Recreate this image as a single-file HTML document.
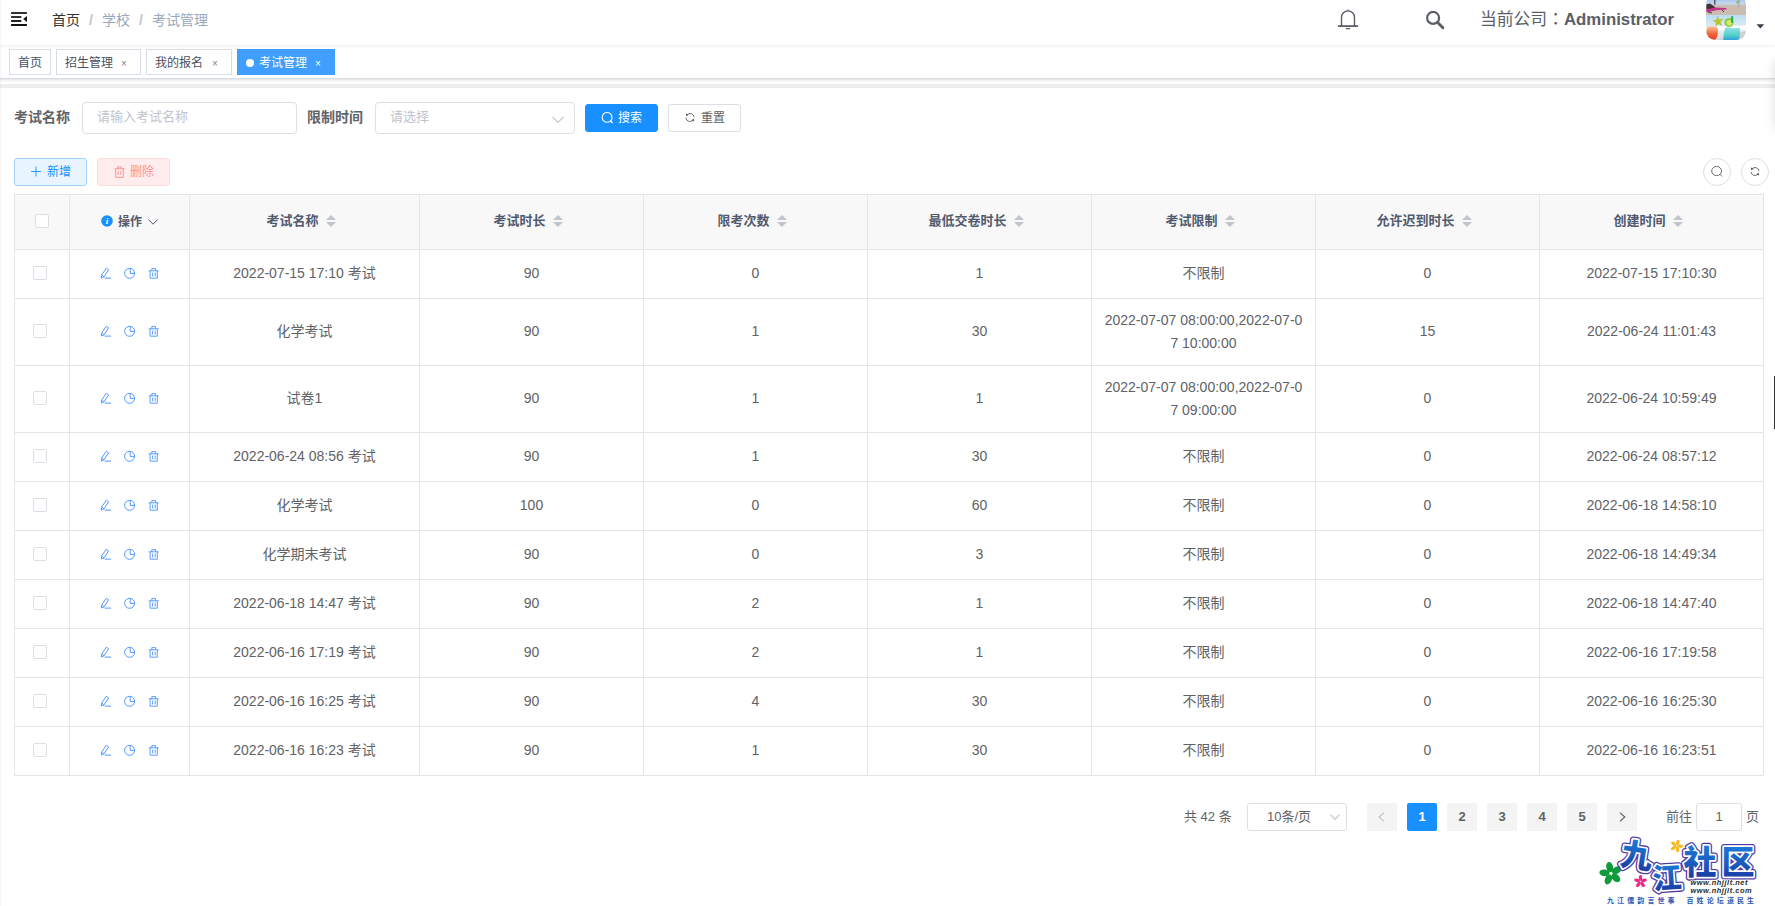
<!DOCTYPE html>
<html lang="zh-CN">
<head>
<meta charset="utf-8">
<title>考试管理</title>
<style>
*{box-sizing:border-box;}
html,body{margin:0;padding:0;}
body{width:1775px;height:906px;position:relative;overflow:hidden;background:#fff;
  font-family:"Liberation Sans","Noto Sans CJK SC",sans-serif;color:#606266;font-size:14px;}
.abs{position:absolute;}
svg{display:block;}
/* ---------- navbar ---------- */
#navbar{position:absolute;left:0;top:0;width:1775px;height:45px;background:#fff;box-shadow:0 1px 4px rgba(0,21,41,.08);z-index:3;}
#hamb{position:absolute;left:11px;top:12px;}
.bc{position:absolute;top:10px;height:20px;line-height:20px;font-size:14px;white-space:nowrap;}
.bc.sep{color:#c0c4cc;font-weight:700;}
.bc.dim{color:#97a8be;}
#company{position:absolute;left:1480px;top:8px;height:24px;line-height:24px;font-size:16.8px;color:#5a5e66;white-space:nowrap;}
#company b{font-weight:700;}
/* ---------- tags ---------- */
#tags{position:absolute;left:0;top:45px;width:1775px;height:34px;background:#fff;border-bottom:1px solid #d8dce5;
  box-shadow:0 1px 3px 0 rgba(0,0,0,.12),0 0 3px 0 rgba(0,0,0,.04);z-index:2;}
.tag{position:absolute;top:4px;height:26px;line-height:26px;border:1px solid #d8dce5;color:#495060;background:#fff;font-size:12px;white-space:nowrap;padding-left:8px;}
.tag .x{position:absolute;top:1px;font-size:10px;color:#7d838f;}
.tag.on{background:#409eff;border-color:#409eff;color:#fff;}
.tag.on .x{color:#fff;}
.tag.on .dot{position:absolute;left:8px;top:9px;width:8px;height:8px;border-radius:50%;background:#fff;}
#band{position:absolute;left:0;top:84px;width:1775px;height:4px;background:#eeeeee;}
#ledge{position:absolute;left:0;top:0;width:2px;height:906px;background:linear-gradient(90deg,rgba(0,0,0,.045),rgba(0,0,0,0));z-index:5;}
#rshadow{position:absolute;left:1778px;top:62px;width:30px;height:64px;background:#fff;box-shadow:0 0 12px 2px rgba(0,0,0,.17);z-index:2;}
#rhandle{position:absolute;left:1774px;top:376px;width:1px;height:53px;background:#333;}
/* ---------- form ---------- */
.lbl{position:absolute;top:101px;height:32px;line-height:32px;font-size:14px;font-weight:700;color:#606266;white-space:nowrap;}
.inp{position:absolute;top:102px;height:32px;border:1px solid #dcdfe6;border-radius:4px;background:#fff;line-height:28px;font-size:13px;color:#c0c4cc;padding-left:14px;white-space:nowrap;}
.btn{position:absolute;height:28px;border-radius:3px;border:1px solid #dcdfe6;font-size:12px;line-height:26px;white-space:nowrap;}
.btn span{position:absolute;top:0;}
.btn svg{position:absolute;}
/* ---------- table ---------- */
#tb{position:absolute;left:14px;top:194px;width:1750px;table-layout:fixed;border-collapse:separate;border-spacing:0;border-top:1px solid #dfe6ec;border-left:1px solid #dfe6ec;}
#tb th,#tb td{border-right:1px solid #dfe6ec;border-bottom:1px solid #dfe6ec;text-align:center;vertical-align:middle;padding:0;white-space:nowrap;}
#tb th{height:55px;background:#f8f8f9;color:#515a6e;font-size:13px;font-weight:700;line-height:23px;}
#tb td{font-size:14px;color:#606266;line-height:23px;padding-bottom:2px;}
#tb tr.r1 td{height:49px;}
#tb tr.r2 td{height:67px;}
#tb tr.r2 td.ml{padding-bottom:0;}
.cb{display:inline-block;width:14px;height:14px;border:1px solid #dcdfe6;border-radius:2px;background:#fff;vertical-align:middle;position:relative;top:-1px;left:-2px;}
.ht{display:inline-block;vertical-align:middle;position:relative;top:-2px;}
.cw{display:inline-block;position:relative;width:24px;height:34px;vertical-align:middle;}
.cw i{position:absolute;left:7px;width:0;height:0;border:5px solid transparent;}
.cw .up{top:5px;border-bottom-color:#c0c4cc;}
.cw .down{bottom:7px;border-top-color:#c0c4cc;}
.ops{position:relative;height:23px;width:119px;}
.ops .info{position:absolute;left:31px;top:4px;}
.ops .opt{position:absolute;left:48px;top:0;font-size:12px;line-height:23px;}
.ops .dn{position:absolute;left:78px;top:8px;}
.opc{position:relative;height:28px;width:119px;}
.opc .ic{position:absolute;top:8px;}
/* ---------- pagination ---------- */
#pag{position:absolute;left:0;top:803px;width:1775px;height:28px;font-size:13px;color:#606266;}
#pag .pt{position:absolute;top:0;height:28px;line-height:28px;white-space:nowrap;}
#pag .psel{position:absolute;top:0;height:28px;line-height:26px;border:1px solid #dcdfe6;border-radius:3px;background:#fff;white-space:nowrap;}
#pag .pb{position:absolute;top:0;width:30px;height:28px;line-height:28px;background:#f4f4f5;border-radius:2px;text-align:center;font-weight:700;color:#606266;}
#pag .pb.on{background:#1890ff;color:#fff;}
</style>
</head>
<body>
<div id="ledge"></div>
<div id="rhandle"></div>

<!-- NAVBAR -->
<div id="navbar">
  <svg id="hamb" width="16" height="14" viewBox="0 0 16 14">
    <rect x="0" y="0" width="16" height="1.9" rx=".5" fill="#333"/>
    <rect x="0" y="4.1" width="10.4" height="1.8" rx=".5" fill="#333"/>
    <rect x="0" y="8.1" width="10.4" height="1.8" rx=".5" fill="#222"/>
    <rect x="0" y="12.1" width="16" height="1.9" rx=".5" fill="#111"/>
    <path d="M16 4 L12.2 7 L16 10 Z" fill="#111"/>
  </svg>
  <span class="bc" style="left:52px;color:#303133;">首页</span>
  <span class="bc sep" style="left:89px;">/</span>
  <span class="bc dim" style="left:102px;">学校</span>
  <span class="bc sep" style="left:139px;">/</span>
  <span class="bc dim" style="left:152px;">考试管理</span>

  <!-- bell -->
  <svg class="abs" style="left:1338px;top:9px" width="20" height="22" viewBox="0 0 20 22">
    <path d="M3.5 17 V8.4 A6.5 6.5 0 0 1 16.5 8.4 V17" fill="none" stroke="#5a5e66" stroke-width="1.4"/>
    <path d="M9.1 1.7 L10 0.1 L10.9 1.7 Z" fill="#5a5e66"/>
    <path d="M0 17.1 H20" stroke="#5a5e66" stroke-width="1.8"/>
    <path d="M8.3 19.7 H11.6" stroke="#5a5e66" stroke-width="1.3" stroke-linecap="round"/>
  </svg>
  <!-- search -->
  <svg class="abs" style="left:1426px;top:11px" width="20" height="19" viewBox="0 0 20 19">
    <circle cx="7.1" cy="6.9" r="6" fill="none" stroke="#5a5e66" stroke-width="2.2"/>
    <path d="M11.9 11.7 L16.9 16.7" stroke="#5a5e66" stroke-width="2.9" stroke-linecap="round"/>
  </svg>
  <div id="company">当前公司<span lang="ja" style="font-family:'Noto Sans CJK JP',sans-serif;line-height:0">：</span><b>Administrator</b></div>
  <!-- avatar -->
  <svg class="abs" style="left:1706px;top:0" width="40" height="40" viewBox="0 0 40 40">
    <defs>
      <clipPath id="avc"><rect x="0" y="-5" width="40" height="45" rx="9.5" ry="9.5"/></clipPath>
      <linearGradient id="sky" x1="0" y1="0" x2="0" y2="1"><stop offset="0" stop-color="#a9c9ee"/><stop offset="1" stop-color="#d9e6f2"/></linearGradient>
      <linearGradient id="sea" x1="0" y1="0" x2="0" y2="1"><stop offset="0" stop-color="#b9dcf6"/><stop offset=".55" stop-color="#e6eff5"/><stop offset="1" stop-color="#d4dde0"/></linearGradient>
      <linearGradient id="g1" x1="0" y1="0" x2="0" y2="1"><stop offset="0" stop-color="#f6c9a0"/><stop offset=".55" stop-color="#f2663a"/><stop offset="1" stop-color="#e83a2a"/></linearGradient>
      <linearGradient id="g2" x1="0" y1="0" x2="0" y2="1"><stop offset="0" stop-color="#8fe0e6"/><stop offset=".6" stop-color="#55d3c6"/><stop offset="1" stop-color="#2f9fe0"/></linearGradient>
    </defs>
    <g clip-path="url(#avc)">
      <rect x="0" y="0" width="40" height="6" fill="url(#sky)"/>
      <rect x="0" y="4.6" width="40" height="11" fill="#cbbdb2"/>
      <rect x="0" y="3.4" width="40" height="1.6" fill="#c3d3e2"/>
      <path d="M1.5 5.5 L8.5 7.6 L20.5 8 L20.5 9.6 L10 10.2 L3 12 L0.5 12 L0.5 7 Z" fill="#c2338a"/>
      <path d="M0.5 4.2 L4.2 3.4 L9.5 7.4 L4.5 8.4 L0.5 9 Z" fill="#40323a"/>
      <path d="M2 12 L6 13 M16 10 L18 12" stroke="#4a3a44" stroke-width="1"/>
      <rect x="8.2" y="0" width="1.2" height="4.6" fill="#3a3a3a"/>
      <path d="M29.5 2.2 l2.2 -2.2 l2.6 .6 l-1 3 l-1.6 .8 z" fill="#9fb88f"/>
      <rect x="32.4" y="3" width=".8" height="5" fill="#a9a58f"/>
      <rect x="0" y="15.2" width="40" height="25" fill="url(#sea)"/>
      <path d="M0 27 C8 25 20 26.5 40 25.5 L40 30 C24 31 10 30 0 31 Z" fill="#fff" opacity=".8"/>
      <path d="M40 31 L40 40 L12 40 C20 36 30 33 40 31 Z" fill="#cdd3d2"/>
      <path d="M11.4 15.8 l2 3.6 l3.9 -.6 l-2.7 3.2 l1.8 3.9 l-3.8 -1.9 l-3.3 2.7 l.6 -4.2 l-3.5 -2.2 l4 -.6 z" fill="#b5c52c"/>
      <circle cx="23" cy="22.6" r="4.6" fill="#86cf3e"/><circle cx="23.4" cy="22.8" r="2.8" fill="#dbe96a"/>
      <rect x="25" y="16" width="2.2" height="7" rx="1.1" fill="#2fb04a"/>
      <path d="M1 27.5 C1 25.8 10.4 25.8 11.4 27.5 C13 33 11 40 8 40 L3 40 C0 38 0 31 1 27.5 Z" fill="url(#g1)"/>
      <path d="M19.4 27.6 C23 26.6 29 29.4 33.6 27.6 C34.6 33 33.6 38 32.6 40 L17.4 40 C17.2 35 18.2 31 19.4 27.6 Z" fill="url(#g2)"/>
    </g>
  </svg>
  <svg class="abs" style="left:1756px;top:24px" width="9" height="5" viewBox="0 0 9 5"><path d="M0.5 0.3 H8.2 L4.35 4.6 Z" fill="#3a3f4a"/></svg>
</div>

<!-- TAGS VIEW -->
<div id="tags">
  <div class="tag" style="left:9px;width:42px;">首页</div>
  <div class="tag" style="left:56px;width:85px;">招生管理<span class="x" style="left:64px;">×</span></div>
  <div class="tag" style="left:146px;width:86px;">我的报名<span class="x" style="left:65px;">×</span></div>
  <div class="tag on" style="left:237px;width:98px;padding-left:21px;"><i class="dot"></i>考试管理<span class="x" style="left:77px;">×</span></div>
</div>
<div id="band"></div>
<div id="rshadow"></div>

<!-- SEARCH FORM -->
<div class="lbl" style="left:14px;">考试名称</div>
<div class="inp" style="left:82px;width:215px;">请输入考试名称</div>
<div class="lbl" style="left:307px;">限制时间</div>
<div class="inp" style="left:375px;width:200px;">请选择
  <svg class="abs" style="left:176px;top:13px" width="12" height="8" viewBox="0 0 12 8"><path d="M0.6 0.8 L6 6.4 L11.4 0.8" fill="none" stroke="#c0c4cc" stroke-width="1.1"/></svg>
</div>
<div class="btn" style="left:585px;top:104px;width:73px;background:#1890ff;border-color:#1890ff;color:#fff;">
  <svg style="left:15px;top:7px" width="13" height="13" viewBox="0 0 13 13"><circle cx="6.1" cy="5.4" r="4.9" fill="none" stroke="#fff" stroke-width="1.1"/><path d="M9.6 9 L11.6 11" stroke="#fff" stroke-width="1.1"/></svg>
  <span style="left:32px;">搜索</span>
</div>
<div class="btn" style="left:668px;top:104px;width:73px;background:#fff;color:#606266;">
  <svg style="left:16px;top:8px" width="11" height="11" viewBox="0 0.5 11 11"><path d="M1.9 2.6 A4 4 0 0 1 9.1 4.7 M8.1 7.4 A4 4 0 0 1 0.9 5.3" fill="none" stroke="#606266" stroke-width=".9"/><path d="M0.8 0.9 L3.7 1.9 L1.3 3.9 Z M9.2 9.1 L6.3 8.1 L8.7 6.1 Z" fill="#606266"/></svg>
  <span style="left:32px;">重置</span>
</div>

<!-- TOOLBAR -->
<div class="btn" style="left:14px;top:158px;width:73px;background:#e8f4ff;border-color:#a3d3ff;color:#1890ff;">
  <svg style="left:16px;top:7px" width="11" height="11" viewBox="0 0 11 11"><path d="M5 0.6 V10.4 M0.1 5.5 H9.9" stroke="#1890ff" stroke-width=".9"/></svg>
  <span style="left:32px;">新增</span>
</div>
<div class="btn" style="left:97px;top:158px;width:73px;background:#ffeded;border-color:#ffdbdb;color:#ff9292;">
  <svg style="left:16px;top:7px" width="11" height="12" viewBox="0 0 11 12"><path d="M0.5 2.8 H10.5 M3.6 2.8 V0.9 H7.4 V2.8 M1.7 2.8 V11.3 H9.3 V2.8 M4.2 5 V9 M6.8 5 V9" fill="none" stroke="#ff9292" stroke-width="1"/></svg>
  <span style="left:32px;">删除</span>
</div>
<!-- round tool buttons -->
<div class="abs" style="left:1703px;top:158px;width:28px;height:28px;border:1px solid #dcdfe6;border-radius:50%;background:#fff;">
  <svg class="abs" style="left:7px;top:7px" width="13" height="13" viewBox="0 0 13 13"><ellipse cx="5.6" cy="5" rx="4.9" ry="4.6" fill="none" stroke="#606266" stroke-width=".95"/><path d="M9.1 8.4 L11 10.4" stroke="#606266" stroke-width=".95"/></svg>
</div>
<div class="abs" style="left:1741px;top:158px;width:28px;height:28px;border:1px solid #dcdfe6;border-radius:50%;background:#fff;">
  <svg class="abs" style="left:8px;top:8px" width="11" height="11" viewBox="0 0.5 11 11"><path d="M1.9 2.6 A4 4 0 0 1 9.1 4.7 M8.1 7.4 A4 4 0 0 1 0.9 5.3" fill="none" stroke="#606266" stroke-width=".9"/><path d="M0.8 0.9 L3.7 1.9 L1.3 3.9 Z M9.2 9.1 L6.3 8.1 L8.7 6.1 Z" fill="#606266"/></svg>
</div>

<!--TABLE-->
<table id="tb" cellspacing="0" cellpadding="0">
<colgroup><col style="width:55px"><col style="width:120px"><col style="width:230px"><col style="width:224px"><col style="width:224px"><col style="width:224px"><col style="width:224px"><col style="width:224px"><col style="width:224px"></colgroup>
<thead><tr>
<th><i class="cb" style="left:0;top:-2px"></i></th>
<th><div class="ops"><svg class="info" width="12" height="12" viewBox="0 0 12 12"><circle cx="6" cy="6" r="5.8" fill="#1890ff"/><text x="6.1" y="9.3" font-size="9" font-weight="700" font-style="italic" font-family="Liberation Serif,serif" fill="#fff" text-anchor="middle">i</text></svg><span class="opt">操作</span><svg class="dn" width="10" height="6" viewBox="0 0 10 6"><path d="M0.5 0.6 L5 5.2 L9.5 0.6" fill="none" stroke="#515a6e" stroke-width="1"/></svg></div></th>
<th><span class="ht">考试名称</span><span class="cw"><i class="up"></i><i class="down"></i></span></th>
<th><span class="ht">考试时长</span><span class="cw"><i class="up"></i><i class="down"></i></span></th>
<th><span class="ht">限考次数</span><span class="cw"><i class="up"></i><i class="down"></i></span></th>
<th><span class="ht">最低交卷时长</span><span class="cw"><i class="up"></i><i class="down"></i></span></th>
<th><span class="ht">考试限制</span><span class="cw"><i class="up"></i><i class="down"></i></span></th>
<th><span class="ht">允许迟到时长</span><span class="cw"><i class="up"></i><i class="down"></i></span></th>
<th><span class="ht">创建时间</span><span class="cw"><i class="up"></i><i class="down"></i></span></th>
</tr></thead><tbody>
<tr class="r1">
<td><i class="cb"></i></td>
<td><div class="opc"><svg class="ic" style="left:30px" width="12" height="12" viewBox="0 0 12 12"><path d="M6.3 1.2 L8.6 2.8 L3.9 10 L1.3 11 L1.5 8.3 Z M1.8 8.2 L4 9.8 M4.6 11.1 H11" fill="none" stroke="#4a93ff" stroke-width=".95"/></svg><svg class="ic" style="left:53px" width="13" height="12" viewBox="0 0 13 12"><circle cx="6.6" cy="6.3" r="5" fill="none" stroke="#4a93ff" stroke-width=".95"/><path d="M7.2 1.2 V6.4 H11.7" fill="none" stroke="#4a93ff" stroke-width=".95"/></svg><svg class="ic" style="left:78px" width="12" height="12" viewBox="0 0 12 12"><path d="M0.7 3.8 H10.7 M3.8 3.8 V1.6 H7.6 V3.8 M2.1 3.8 V11.2 H9.3 V3.8 M4.6 5.6 V9.4 M7.2 5.6 V9.4" fill="none" stroke="#4a93ff" stroke-width=".9"/></svg></div></td>
<td>2022-07-15 17:10 考试</td>
<td>90</td>
<td>0</td>
<td>1</td>
<td>不限制</td>
<td>0</td>
<td>2022-07-15 17:10:30</td>
</tr>
<tr class="r2">
<td><i class="cb"></i></td>
<td><div class="opc"><svg class="ic" style="left:30px" width="12" height="12" viewBox="0 0 12 12"><path d="M6.3 1.2 L8.6 2.8 L3.9 10 L1.3 11 L1.5 8.3 Z M1.8 8.2 L4 9.8 M4.6 11.1 H11" fill="none" stroke="#4a93ff" stroke-width=".95"/></svg><svg class="ic" style="left:53px" width="13" height="12" viewBox="0 0 13 12"><circle cx="6.6" cy="6.3" r="5" fill="none" stroke="#4a93ff" stroke-width=".95"/><path d="M7.2 1.2 V6.4 H11.7" fill="none" stroke="#4a93ff" stroke-width=".95"/></svg><svg class="ic" style="left:78px" width="12" height="12" viewBox="0 0 12 12"><path d="M0.7 3.8 H10.7 M3.8 3.8 V1.6 H7.6 V3.8 M2.1 3.8 V11.2 H9.3 V3.8 M4.6 5.6 V9.4 M7.2 5.6 V9.4" fill="none" stroke="#4a93ff" stroke-width=".9"/></svg></div></td>
<td>化学考试</td>
<td>90</td>
<td>1</td>
<td>30</td>
<td class="ml">2022-07-07 08:00:00,2022-07-0<br>7 10:00:00</td>
<td>15</td>
<td>2022-06-24 11:01:43</td>
</tr>
<tr class="r2">
<td><i class="cb"></i></td>
<td><div class="opc"><svg class="ic" style="left:30px" width="12" height="12" viewBox="0 0 12 12"><path d="M6.3 1.2 L8.6 2.8 L3.9 10 L1.3 11 L1.5 8.3 Z M1.8 8.2 L4 9.8 M4.6 11.1 H11" fill="none" stroke="#4a93ff" stroke-width=".95"/></svg><svg class="ic" style="left:53px" width="13" height="12" viewBox="0 0 13 12"><circle cx="6.6" cy="6.3" r="5" fill="none" stroke="#4a93ff" stroke-width=".95"/><path d="M7.2 1.2 V6.4 H11.7" fill="none" stroke="#4a93ff" stroke-width=".95"/></svg><svg class="ic" style="left:78px" width="12" height="12" viewBox="0 0 12 12"><path d="M0.7 3.8 H10.7 M3.8 3.8 V1.6 H7.6 V3.8 M2.1 3.8 V11.2 H9.3 V3.8 M4.6 5.6 V9.4 M7.2 5.6 V9.4" fill="none" stroke="#4a93ff" stroke-width=".9"/></svg></div></td>
<td>试卷1</td>
<td>90</td>
<td>1</td>
<td>1</td>
<td class="ml">2022-07-07 08:00:00,2022-07-0<br>7 09:00:00</td>
<td>0</td>
<td>2022-06-24 10:59:49</td>
</tr>
<tr class="r1">
<td><i class="cb"></i></td>
<td><div class="opc"><svg class="ic" style="left:30px" width="12" height="12" viewBox="0 0 12 12"><path d="M6.3 1.2 L8.6 2.8 L3.9 10 L1.3 11 L1.5 8.3 Z M1.8 8.2 L4 9.8 M4.6 11.1 H11" fill="none" stroke="#4a93ff" stroke-width=".95"/></svg><svg class="ic" style="left:53px" width="13" height="12" viewBox="0 0 13 12"><circle cx="6.6" cy="6.3" r="5" fill="none" stroke="#4a93ff" stroke-width=".95"/><path d="M7.2 1.2 V6.4 H11.7" fill="none" stroke="#4a93ff" stroke-width=".95"/></svg><svg class="ic" style="left:78px" width="12" height="12" viewBox="0 0 12 12"><path d="M0.7 3.8 H10.7 M3.8 3.8 V1.6 H7.6 V3.8 M2.1 3.8 V11.2 H9.3 V3.8 M4.6 5.6 V9.4 M7.2 5.6 V9.4" fill="none" stroke="#4a93ff" stroke-width=".9"/></svg></div></td>
<td>2022-06-24 08:56 考试</td>
<td>90</td>
<td>1</td>
<td>30</td>
<td>不限制</td>
<td>0</td>
<td>2022-06-24 08:57:12</td>
</tr>
<tr class="r1">
<td><i class="cb"></i></td>
<td><div class="opc"><svg class="ic" style="left:30px" width="12" height="12" viewBox="0 0 12 12"><path d="M6.3 1.2 L8.6 2.8 L3.9 10 L1.3 11 L1.5 8.3 Z M1.8 8.2 L4 9.8 M4.6 11.1 H11" fill="none" stroke="#4a93ff" stroke-width=".95"/></svg><svg class="ic" style="left:53px" width="13" height="12" viewBox="0 0 13 12"><circle cx="6.6" cy="6.3" r="5" fill="none" stroke="#4a93ff" stroke-width=".95"/><path d="M7.2 1.2 V6.4 H11.7" fill="none" stroke="#4a93ff" stroke-width=".95"/></svg><svg class="ic" style="left:78px" width="12" height="12" viewBox="0 0 12 12"><path d="M0.7 3.8 H10.7 M3.8 3.8 V1.6 H7.6 V3.8 M2.1 3.8 V11.2 H9.3 V3.8 M4.6 5.6 V9.4 M7.2 5.6 V9.4" fill="none" stroke="#4a93ff" stroke-width=".9"/></svg></div></td>
<td>化学考试</td>
<td>100</td>
<td>0</td>
<td>60</td>
<td>不限制</td>
<td>0</td>
<td>2022-06-18 14:58:10</td>
</tr>
<tr class="r1">
<td><i class="cb"></i></td>
<td><div class="opc"><svg class="ic" style="left:30px" width="12" height="12" viewBox="0 0 12 12"><path d="M6.3 1.2 L8.6 2.8 L3.9 10 L1.3 11 L1.5 8.3 Z M1.8 8.2 L4 9.8 M4.6 11.1 H11" fill="none" stroke="#4a93ff" stroke-width=".95"/></svg><svg class="ic" style="left:53px" width="13" height="12" viewBox="0 0 13 12"><circle cx="6.6" cy="6.3" r="5" fill="none" stroke="#4a93ff" stroke-width=".95"/><path d="M7.2 1.2 V6.4 H11.7" fill="none" stroke="#4a93ff" stroke-width=".95"/></svg><svg class="ic" style="left:78px" width="12" height="12" viewBox="0 0 12 12"><path d="M0.7 3.8 H10.7 M3.8 3.8 V1.6 H7.6 V3.8 M2.1 3.8 V11.2 H9.3 V3.8 M4.6 5.6 V9.4 M7.2 5.6 V9.4" fill="none" stroke="#4a93ff" stroke-width=".9"/></svg></div></td>
<td>化学期末考试</td>
<td>90</td>
<td>0</td>
<td>3</td>
<td>不限制</td>
<td>0</td>
<td>2022-06-18 14:49:34</td>
</tr>
<tr class="r1">
<td><i class="cb"></i></td>
<td><div class="opc"><svg class="ic" style="left:30px" width="12" height="12" viewBox="0 0 12 12"><path d="M6.3 1.2 L8.6 2.8 L3.9 10 L1.3 11 L1.5 8.3 Z M1.8 8.2 L4 9.8 M4.6 11.1 H11" fill="none" stroke="#4a93ff" stroke-width=".95"/></svg><svg class="ic" style="left:53px" width="13" height="12" viewBox="0 0 13 12"><circle cx="6.6" cy="6.3" r="5" fill="none" stroke="#4a93ff" stroke-width=".95"/><path d="M7.2 1.2 V6.4 H11.7" fill="none" stroke="#4a93ff" stroke-width=".95"/></svg><svg class="ic" style="left:78px" width="12" height="12" viewBox="0 0 12 12"><path d="M0.7 3.8 H10.7 M3.8 3.8 V1.6 H7.6 V3.8 M2.1 3.8 V11.2 H9.3 V3.8 M4.6 5.6 V9.4 M7.2 5.6 V9.4" fill="none" stroke="#4a93ff" stroke-width=".9"/></svg></div></td>
<td>2022-06-18 14:47 考试</td>
<td>90</td>
<td>2</td>
<td>1</td>
<td>不限制</td>
<td>0</td>
<td>2022-06-18 14:47:40</td>
</tr>
<tr class="r1">
<td><i class="cb"></i></td>
<td><div class="opc"><svg class="ic" style="left:30px" width="12" height="12" viewBox="0 0 12 12"><path d="M6.3 1.2 L8.6 2.8 L3.9 10 L1.3 11 L1.5 8.3 Z M1.8 8.2 L4 9.8 M4.6 11.1 H11" fill="none" stroke="#4a93ff" stroke-width=".95"/></svg><svg class="ic" style="left:53px" width="13" height="12" viewBox="0 0 13 12"><circle cx="6.6" cy="6.3" r="5" fill="none" stroke="#4a93ff" stroke-width=".95"/><path d="M7.2 1.2 V6.4 H11.7" fill="none" stroke="#4a93ff" stroke-width=".95"/></svg><svg class="ic" style="left:78px" width="12" height="12" viewBox="0 0 12 12"><path d="M0.7 3.8 H10.7 M3.8 3.8 V1.6 H7.6 V3.8 M2.1 3.8 V11.2 H9.3 V3.8 M4.6 5.6 V9.4 M7.2 5.6 V9.4" fill="none" stroke="#4a93ff" stroke-width=".9"/></svg></div></td>
<td>2022-06-16 17:19 考试</td>
<td>90</td>
<td>2</td>
<td>1</td>
<td>不限制</td>
<td>0</td>
<td>2022-06-16 17:19:58</td>
</tr>
<tr class="r1">
<td><i class="cb"></i></td>
<td><div class="opc"><svg class="ic" style="left:30px" width="12" height="12" viewBox="0 0 12 12"><path d="M6.3 1.2 L8.6 2.8 L3.9 10 L1.3 11 L1.5 8.3 Z M1.8 8.2 L4 9.8 M4.6 11.1 H11" fill="none" stroke="#4a93ff" stroke-width=".95"/></svg><svg class="ic" style="left:53px" width="13" height="12" viewBox="0 0 13 12"><circle cx="6.6" cy="6.3" r="5" fill="none" stroke="#4a93ff" stroke-width=".95"/><path d="M7.2 1.2 V6.4 H11.7" fill="none" stroke="#4a93ff" stroke-width=".95"/></svg><svg class="ic" style="left:78px" width="12" height="12" viewBox="0 0 12 12"><path d="M0.7 3.8 H10.7 M3.8 3.8 V1.6 H7.6 V3.8 M2.1 3.8 V11.2 H9.3 V3.8 M4.6 5.6 V9.4 M7.2 5.6 V9.4" fill="none" stroke="#4a93ff" stroke-width=".9"/></svg></div></td>
<td>2022-06-16 16:25 考试</td>
<td>90</td>
<td>4</td>
<td>30</td>
<td>不限制</td>
<td>0</td>
<td>2022-06-16 16:25:30</td>
</tr>
<tr class="r1">
<td><i class="cb"></i></td>
<td><div class="opc"><svg class="ic" style="left:30px" width="12" height="12" viewBox="0 0 12 12"><path d="M6.3 1.2 L8.6 2.8 L3.9 10 L1.3 11 L1.5 8.3 Z M1.8 8.2 L4 9.8 M4.6 11.1 H11" fill="none" stroke="#4a93ff" stroke-width=".95"/></svg><svg class="ic" style="left:53px" width="13" height="12" viewBox="0 0 13 12"><circle cx="6.6" cy="6.3" r="5" fill="none" stroke="#4a93ff" stroke-width=".95"/><path d="M7.2 1.2 V6.4 H11.7" fill="none" stroke="#4a93ff" stroke-width=".95"/></svg><svg class="ic" style="left:78px" width="12" height="12" viewBox="0 0 12 12"><path d="M0.7 3.8 H10.7 M3.8 3.8 V1.6 H7.6 V3.8 M2.1 3.8 V11.2 H9.3 V3.8 M4.6 5.6 V9.4 M7.2 5.6 V9.4" fill="none" stroke="#4a93ff" stroke-width=".9"/></svg></div></td>
<td>2022-06-16 16:23 考试</td>
<td>90</td>
<td>1</td>
<td>30</td>
<td>不限制</td>
<td>0</td>
<td>2022-06-16 16:23:51</td>
</tr>
</tbody></table>
<!--/TABLE-->

<!--PAGINATION-->
<div id="pag">
  <span class="pt" style="left:1184px;">共 42 条</span>
  <div class="psel" style="left:1247px;width:100px;"><span style="position:absolute;left:19px;top:0;">10条/页</span>
    <svg class="abs" style="left:82px;top:10px" width="10" height="7" viewBox="0 0 10 7"><path d="M0.6 0.7 L5 5.4 L9.4 0.7" fill="none" stroke="#c0c4cc" stroke-width="1.1"/></svg>
  </div>
  <div class="pb" style="left:1367px;"><svg class="abs" style="left:11px;top:9px" width="7" height="10" viewBox="0 0 7 10"><path d="M6 0.6 L1.2 5 L6 9.4" fill="none" stroke="#c0c4cc" stroke-width="1.2"/></svg></div>
  <div class="pb on" style="left:1407px;">1</div>
  <div class="pb" style="left:1447px;">2</div>
  <div class="pb" style="left:1487px;">3</div>
  <div class="pb" style="left:1527px;">4</div>
  <div class="pb" style="left:1567px;">5</div>
  <div class="pb" style="left:1607px;"><svg class="abs" style="left:12px;top:9px" width="7" height="10" viewBox="0 0 7 10"><path d="M1 0.6 L5.8 5 L1 9.4" fill="none" stroke="#606266" stroke-width="1.2"/></svg></div>
  <span class="pt" style="left:1666px;">前往</span>
  <div class="psel" style="left:1696px;width:46px;text-align:center;">1</div>
  <span class="pt" style="left:1746px;">页</span>
</div>

<!--/PAGINATION-->

<!--WATERMARK-->
<svg id="wm" class="abs" style="left:1595px;top:832px" width="180" height="74" viewBox="0 0 180 74">
  <defs>
    <linearGradient id="wg" x1="0" y1="0" x2="0" y2="1"><stop offset="0" stop-color="#1b8be0"/><stop offset=".55" stop-color="#1a5fc0"/><stop offset="1" stop-color="#1a2f9a"/></linearGradient>
  </defs>
  <!-- green flower -->
  <g transform="translate(16,41.5)" fill="#0f9a3c">
    <ellipse cx="0" cy="-6.5" rx="3.4" ry="5.2" transform="rotate(-12)"/>
    <ellipse cx="0" cy="-6.5" rx="3.4" ry="5.2" transform="rotate(60)"/>
    <ellipse cx="0" cy="-6.5" rx="3.4" ry="5.2" transform="rotate(132)"/>
    <ellipse cx="0" cy="-6.5" rx="3.4" ry="5.2" transform="rotate(204)"/>
    <ellipse cx="0" cy="-6.5" rx="3.4" ry="5.2" transform="rotate(276)"/>
    <circle r="1.3" fill="#e8f6e8"/>
  </g>
  <!-- pink flower -->
  <g transform="translate(45.5,49.5)" fill="#ee2a88">
    <ellipse cx="0" cy="-3.6" rx="1.7" ry="3" transform="rotate(0)"/>
    <ellipse cx="0" cy="-3.6" rx="1.7" ry="3" transform="rotate(72)"/>
    <ellipse cx="0" cy="-3.6" rx="1.7" ry="3" transform="rotate(144)"/>
    <ellipse cx="0" cy="-3.6" rx="1.7" ry="3" transform="rotate(216)"/>
    <ellipse cx="0" cy="-3.6" rx="1.7" ry="3" transform="rotate(288)"/>
  </g>
  <!-- yellow flower -->
  <g transform="translate(81.5,14)" fill="#f6b81a">
    <ellipse cx="0" cy="-3.6" rx="1.6" ry="3" transform="rotate(20)"/>
    <ellipse cx="0" cy="-3.6" rx="1.6" ry="3" transform="rotate(92)"/>
    <ellipse cx="0" cy="-3.6" rx="1.6" ry="3" transform="rotate(164)"/>
    <ellipse cx="0" cy="-3.6" rx="1.6" ry="3" transform="rotate(236)"/>
    <ellipse cx="0" cy="-3.6" rx="1.6" ry="3" transform="rotate(308)"/>
  </g>
  <g font-family="Noto Sans CJK SC,sans-serif" font-weight="900" stroke-linejoin="round" paint-order="stroke">
    <g stroke="#4f3aa6" stroke-width="6" fill="#4f3aa6">
      <text x="26" y="35" font-size="32" transform="rotate(9 41 22)">九</text>
      <text x="57.5" y="56.5" font-size="29" transform="rotate(-4 72 46)">江</text>
      <text x="88.5" y="41.5" font-size="33">社</text>
      <text x="126.5" y="42" font-size="33">区</text>
    </g>
    <g stroke="#fff" stroke-width="3.4" fill="url(#wg)">
      <text x="26" y="35" font-size="32" transform="rotate(9 41 22)">九</text>
      <text x="57.5" y="56.5" font-size="29" transform="rotate(-4 72 46)">江</text>
      <text x="88.5" y="41.5" font-size="33">社</text>
      <text x="126.5" y="42" font-size="33">区</text>
    </g>
  </g>
  <g font-family="Liberation Sans,sans-serif" font-weight="700" font-style="italic" font-size="7.4" fill="#2b2b2b" letter-spacing=".55" stroke="#fff" stroke-width=".8" paint-order="stroke">
    <text x="95.5" y="53.4">www.nhjjlt.net</text>
    <text x="95.5" y="61">www.nhjjlt.com</text>
  </g>
  <g font-family="Noto Sans CJK SC,sans-serif" font-weight="700" font-size="7" fill="#2a55b5" letter-spacing="3.1">
    <text x="12" y="71.2">九江儒韵言世事</text>
    <text x="91.5" y="71.2">百姓论坛道民生</text>
  </g>
</svg>

<!--/WATERMARK-->

</body>
</html>
